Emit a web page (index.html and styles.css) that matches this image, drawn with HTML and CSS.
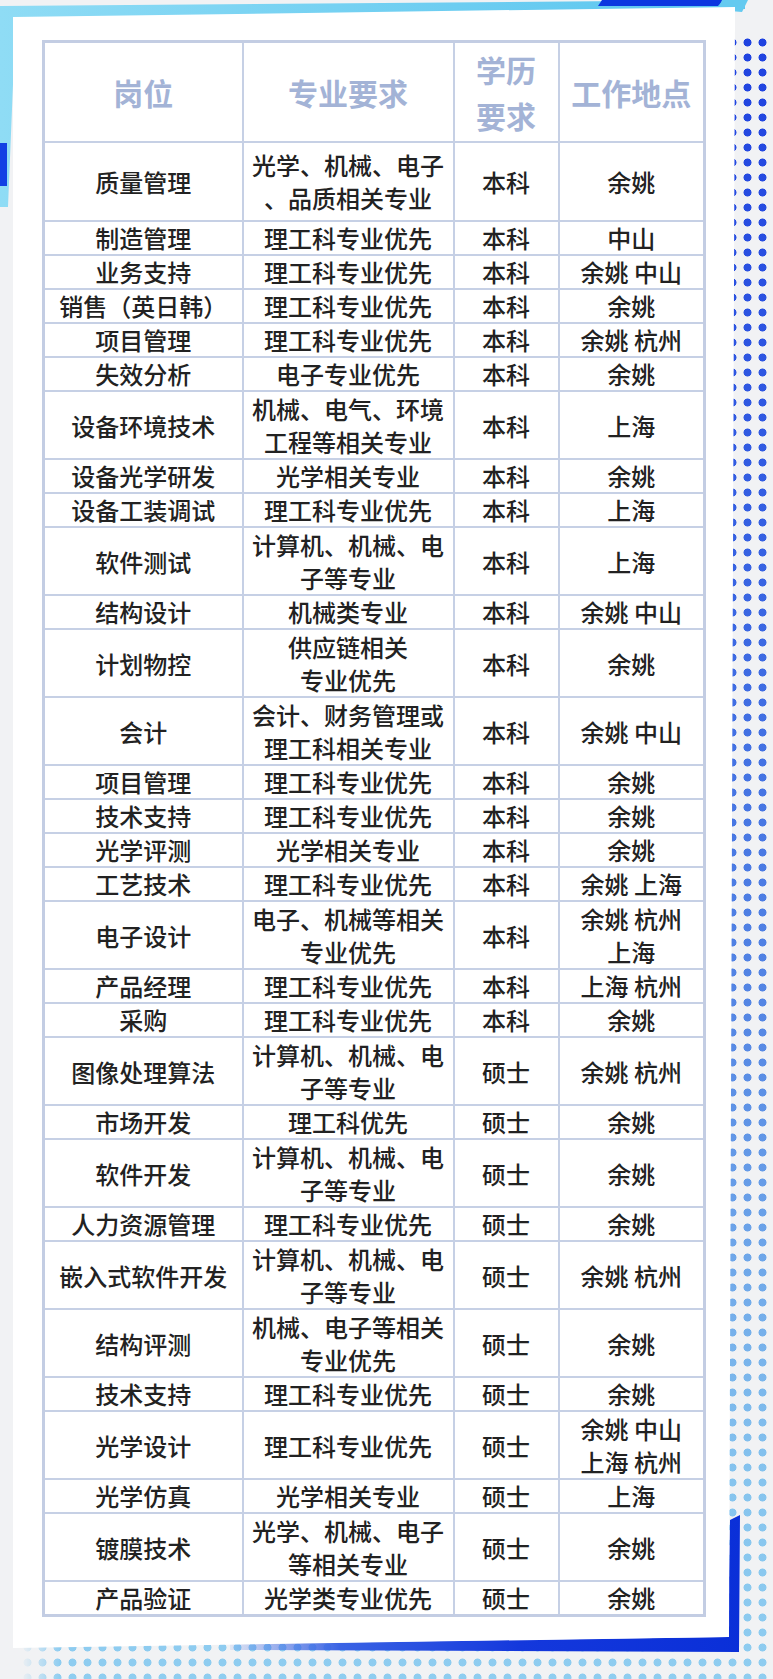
FILE: index.html
```html
<!DOCTYPE html>
<html lang="zh-CN">
<head>
<meta charset="utf-8">
<title>岗位需求</title>
<link rel="stylesheet" href="styles.css">
</head>
<body>
<div class="page">
  <div class="deco dots"></div>
  <div class="deco cyan"></div>
  <div class="deco blue-left"></div>
  <div class="deco blue-top"></div>
  <div class="deco cyan-top"></div>
  <div class="deco blue-bottom"></div>
  <div class="card">
    <table class="jobs">
      <colgroup>
        <col class="c1"><col class="c2"><col class="c3"><col class="c4">
      </colgroup>
      <thead>
        <tr><th>岗位</th><th>专业要求</th><th>学历<br>要求</th><th>工作地点</th></tr>
      </thead>
      <tbody>
        <tr class="first"><td>质量管理</td><td>光学、机械、电子<br>、品质相关专业</td><td>本科</td><td>余姚</td></tr>
        <tr><td>制造管理</td><td>理工科专业优先</td><td>本科</td><td>中山</td></tr>
        <tr><td>业务支持</td><td>理工科专业优先</td><td>本科</td><td>余姚 中山</td></tr>
        <tr><td>销售（英日韩）</td><td>理工科专业优先</td><td>本科</td><td>余姚</td></tr>
        <tr><td>项目管理</td><td>理工科专业优先</td><td>本科</td><td>余姚 杭州</td></tr>
        <tr><td>失效分析</td><td>电子专业优先</td><td>本科</td><td>余姚</td></tr>
        <tr class="dbl"><td>设备环境技术</td><td>机械、电气、环境<br>工程等相关专业</td><td>本科</td><td>上海</td></tr>
        <tr><td>设备光学研发</td><td>光学相关专业</td><td>本科</td><td>余姚</td></tr>
        <tr><td>设备工装调试</td><td>理工科专业优先</td><td>本科</td><td>上海</td></tr>
        <tr class="dbl"><td>软件测试</td><td>计算机、机械、电<br>子等专业</td><td>本科</td><td>上海</td></tr>
        <tr><td>结构设计</td><td>机械类专业</td><td>本科</td><td>余姚 中山</td></tr>
        <tr class="dbl"><td>计划物控</td><td>供应链相关<br>专业优先</td><td>本科</td><td>余姚</td></tr>
        <tr class="dbl"><td>会计</td><td>会计、财务管理或<br>理工科相关专业</td><td>本科</td><td>余姚 中山</td></tr>
        <tr><td>项目管理</td><td>理工科专业优先</td><td>本科</td><td>余姚</td></tr>
        <tr><td>技术支持</td><td>理工科专业优先</td><td>本科</td><td>余姚</td></tr>
        <tr><td>光学评测</td><td>光学相关专业</td><td>本科</td><td>余姚</td></tr>
        <tr><td>工艺技术</td><td>理工科专业优先</td><td>本科</td><td>余姚 上海</td></tr>
        <tr class="dbl"><td>电子设计</td><td>电子、机械等相关<br>专业优先</td><td>本科</td><td>余姚 杭州<br>上海</td></tr>
        <tr><td>产品经理</td><td>理工科专业优先</td><td>本科</td><td>上海 杭州</td></tr>
        <tr><td>采购</td><td>理工科专业优先</td><td>本科</td><td>余姚</td></tr>
        <tr class="dbl"><td>图像处理算法</td><td>计算机、机械、电<br>子等专业</td><td>硕士</td><td>余姚 杭州</td></tr>
        <tr><td>市场开发</td><td>理工科优先</td><td>硕士</td><td>余姚</td></tr>
        <tr class="dbl"><td>软件开发</td><td>计算机、机械、电<br>子等专业</td><td>硕士</td><td>余姚</td></tr>
        <tr><td>人力资源管理</td><td>理工科专业优先</td><td>硕士</td><td>余姚</td></tr>
        <tr class="dbl"><td>嵌入式软件开发</td><td>计算机、机械、电<br>子等专业</td><td>硕士</td><td>余姚 杭州</td></tr>
        <tr class="dbl"><td>结构评测</td><td>机械、电子等相关<br>专业优先</td><td>硕士</td><td>余姚</td></tr>
        <tr><td>技术支持</td><td>理工科专业优先</td><td>硕士</td><td>余姚</td></tr>
        <tr class="dbl"><td>光学设计</td><td>理工科专业优先</td><td>硕士</td><td>余姚 中山<br>上海 杭州</td></tr>
        <tr><td>光学仿真</td><td>光学相关专业</td><td>硕士</td><td>上海</td></tr>
        <tr class="dbl"><td>镀膜技术</td><td>光学、机械、电子<br>等相关专业</td><td>硕士</td><td>余姚</td></tr>
        <tr><td>产品验证</td><td>光学类专业优先</td><td>硕士</td><td>余姚</td></tr>
      </tbody>
    </table>
  </div>
</div>
</body>
</html>
```
FILE: styles.css
```css
html, body {
  margin: 0;
  padding: 0;
}
body {
  background: #f1f2f4;
  font-family: "Noto Sans CJK SC", "Noto Sans", sans-serif;
}
.page {
  position: relative;
  width: 773px;
  height: 1679px;
  overflow: hidden;
  background: #f1f2f4;
}
.deco {
  position: absolute;
}
.dots {
  left: 19.5px;
  top: 34.5px;
  right: 0;
  bottom: 0;
  background: linear-gradient(to bottom, #1f42e0 0%, #3560e2 30%, #5587e4 60%, #86c4ee 88%, #8fcdf0 100%);
  -webkit-mask-image: radial-gradient(circle, #000 3.7px, transparent 4.3px), linear-gradient(to right, transparent 0, #000 40px);
  -webkit-mask-size: 15px 15px, 100% 100%;
  -webkit-mask-composite: source-in;
  mask-image: radial-gradient(circle, #000 3.7px, transparent 4.3px), linear-gradient(to right, transparent 0, #000 40px);
  mask-size: 15px 15px, 100% 100%;
  mask-composite: intersect;
}
.cyan {
  left: 0;
  top: 0;
  width: 760px;
  height: 210px;
  background: linear-gradient(to right, #8fdcf5, #6ccdf1 60%, #5cc6ef);
  clip-path: polygon(0 6px, 745px 0, 745px 9px, 15px 18px, 14px 60px, 8px 207px, 0 207px);
}
.blue-left {
  left: 0;
  top: 143px;
  width: 7px;
  height: 43px;
  background: #1240e4;
}
.blue-top {
  left: 598px;
  top: 0;
  width: 125px;
  height: 6px;
  background: #0c37e0;
  clip-path: polygon(4px 0, 125px 0, 120px 6px, 0 6px);
}
.cyan-top {
  left: 718px;
  top: 0;
  width: 30px;
  height: 12px;
  background: #64caf0;
  clip-path: polygon(4px 0, 30px 0, 24px 12px, 0 10px);
}
.blue-bottom {
  left: 220px;
  top: 1505px;
  width: 525px;
  height: 150px;
  background: linear-gradient(to right, rgba(40, 90, 230, 0) 0, #3a63e4 120px, #1438dc 300px, #0a2fd8 100%);
  clip-path: polygon(510px 15px, 520px 10px, 519px 147px, 10px 145px, 10px 139px, 508px 132px);
}
.card {
  position: relative;
  z-index: 1;
  margin: 7px 0 0 13px;
  width: 722px;
  height: 1641px;
  box-sizing: border-box;
  padding: 33px 0 0 29px;
  background: #ffffff;
  clip-path: polygon(0 10px, 722px 0, 716px 1630px, 0 1641px);
}
.jobs {
  border-collapse: collapse;
  table-layout: fixed;
  width: 661px;
  border: 3px solid #c3cde3;
  color: #222222;
}
.c1 { width: 199px; }
.c2 { width: 211px; }
.c3 { width: 105px; }
.c4 { width: 146px; }
.jobs th,
.jobs td {
  border: 2px solid #c6d0e5;
  padding: 0;
  text-align: center;
  vertical-align: middle;
  white-space: nowrap;
  overflow: hidden;
}
.jobs th {
  font-size: 30px;
  font-weight: 700;
  color: #a3b3d6;
  line-height: 46px;
  padding: 3px 0;
}
.jobs td {
  font-size: 24px;
  font-weight: 500;
  line-height: 32px;
}
.jobs tr.dbl td {
  line-height: 33px;
}
.jobs tr.first td {
  line-height: 33px;
  padding: 5px 0 6px;
}
```
